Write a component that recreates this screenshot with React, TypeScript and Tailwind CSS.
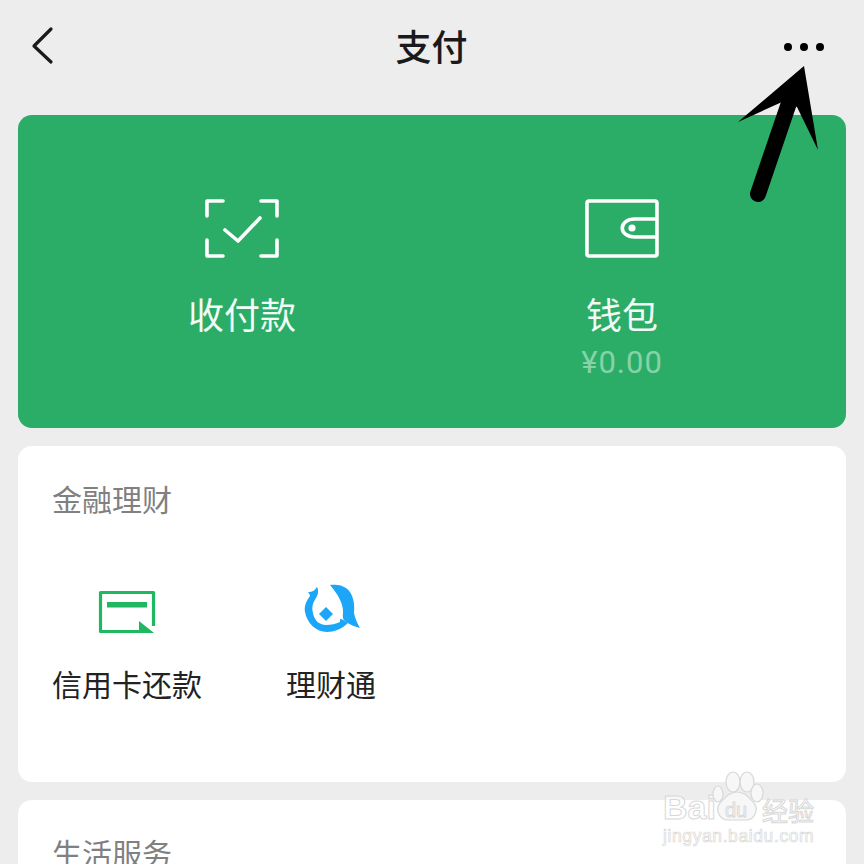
const cjk = "font-['Noto_Sans_CJK_SC','Noto_Sans',sans-serif]";

function Back() {
  return (
    <svg width="26" height="40" viewBox="0 0 26 40" fill="none" stroke="#1a1a1a" strokeWidth="3.2" strokeLinecap="round" strokeLinejoin="round">
      <path d="M21 3 L4 20 L21 36" />
    </svg>
  );
}

function ScanIcon() {
  return (
    <svg width="74" height="60" viewBox="0 0 74 60" fill="none" stroke="#fff" strokeWidth="3.6" strokeLinejoin="round" strokeLinecap="round">
      <path d="M18 2 H2 V17" />
      <path d="M56 2 H72 V17" />
      <path d="M2 41 V57 H18" />
      <path d="M72 41 V57 H56" />
      <path d="M20 31 L33 42 L55 19" />
    </svg>
  );
}

function WalletIcon() {
  return (
    <svg width="74" height="60" viewBox="0 0 74 60" fill="none" stroke="#fff" strokeWidth="3.6" strokeLinejoin="round">
      <rect x="2" y="2" width="70" height="55" rx="2" />
      <path d="M72 20 H50 C33 20 33 38 50 38 H72" />
      <circle cx="47" cy="29" r="3.6" fill="#fff" stroke="none" />
    </svg>
  );
}

function CardIcon() {
  return (
    <svg width="58" height="44" viewBox="0 0 58 44" fill="none">
      <path d="M42 41.5 H2.5 V2.5 H55.5 V36" stroke="#1fb860" strokeWidth="3.2" strokeLinejoin="round" />
      <rect x="9" y="12" width="40" height="5.5" fill="#1fb860" />
      <path d="M41 31 L56 43 H41 Z" fill="#1fb860" />
    </svg>
  );
}

function FishIcon() {
  return (
    <svg width="66" height="64" viewBox="0 0 66 64" fill="#1ba6f8">
      <path d="M32 5 C38 4 44 5 48 8 C55 13 57 23 56 33 C57 38 59 43 62 48 C58 47 52 45 47 41 C44 39 45 35 45 31 C45 24 40 14 32 5 Z" />
      <path d="M19 7 C17 10 15 12 10 12 C11 13 12 15 12 16 C8 21 6 27 7 32 C9 43 18 52 29 52 C36 52 44 49 50 43 C47 41 44 39 42 39 L42 42 C38 44 33 45 28 45 C21 45 16 40 15 33 C13 26 16 21 18 18 C20 15 21 10 19 7 Z" />
      <path d="M28 27 L35 34 L28 41 L21 34 Z" />
    </svg>
  );
}

function Arrow() {
  return (
    <svg className="absolute left-0 top-0" width="864" height="864" viewBox="0 0 864 864" fill="none">
      <path d="M804 66 L738 122 L782 102 L797 107 L818 150 Z" fill="#000" />
      <path d="M758 194 L790 100" stroke="#000" strokeWidth="16" strokeLinecap="round" />
    </svg>
  );
}

function Watermark() {
  const outline = "text-white/60 [-webkit-text-stroke:1px_#d8d8d8]";
  return (
    <div className="absolute left-[663px] top-[765px] w-[170px]">
      <div className="flex items-end h-[58px]">
        <span className={`font-['Liberation_Sans',sans-serif] text-[34px] leading-[32px] font-bold ${outline}`}>Bai</span>
        <svg width="54" height="58" viewBox="0 0 54 58" fill="#f7f7f7" stroke="#d8d8d8" strokeWidth="1.2" className="-ml-[6px] shrink-0">
          <ellipse cx="23" cy="17" rx="7" ry="10" />
          <ellipse cx="37" cy="17" rx="7" ry="10" />
          <ellipse cx="8" cy="29" rx="5" ry="8" />
          <ellipse cx="47" cy="28" rx="6" ry="9" />
          <path d="M27 27 C35 27 39 33 44 38 C49 44 45 55 36 55 C30 55 24 55 18 55 C9 55 5 44 10 38 C15 33 19 27 27 27 Z" />
          <text x="15" y="52" fontSize="20" fontFamily="Liberation Sans" fill="none" strokeWidth="0.9">du</text>
        </svg>
        <span className={`${cjk} text-[26px] leading-[26px] -ml-[2px] ${outline}`}>经验</span>
      </div>
      <div className={`font-['Liberation_Sans',sans-serif] text-[17.5px] leading-5 tracking-[0.6px] mt-[3px] text-white/60 [-webkit-text-stroke:0.7px_#d8d8d8]`}>jingyan.baidu.com</div>
    </div>
  );
}

export default function App() {
  return (
    <div className={`relative w-[864px] h-[864px] overflow-hidden bg-[#ededed] ${cjk}`}>
      <header className="h-[115px] flex items-center pl-[30px] pr-[40px] pb-[25px]">
        <div className="flex-1 mt-[2px]"><Back /></div>
        <h1 className="text-[36px] leading-none font-medium text-[#1a1a1a] ml-[9px]">支付</h1>
        <div className="flex-1 flex justify-end gap-2 mt-[4px]">
          <span className="w-2 h-2 rounded-full bg-black" />
          <span className="w-2 h-2 rounded-full bg-black" />
          <span className="w-2 h-2 rounded-full bg-black" />
        </div>
      </header>

      <section className="mx-[18px] h-[313px] rounded-[14px] bg-[#2bad67] grid grid-cols-[380px_380px] justify-center pt-[84px]">
        <div className="flex flex-col items-center">
          <ScanIcon />
          <div className="mt-[29px] text-[36px] leading-[50px] text-[#f2fbf6]">收付款</div>
        </div>
        <div className="flex flex-col items-center">
          <WalletIcon />
          <div className="mt-[29px] text-[36px] leading-[50px] text-[#f2fbf6]">钱包</div>
          <div className="mt-[3px] font-['Roboto',sans-serif] text-[31px] leading-[44px] tracking-[1px] text-[#86d3a8]">¥0.00</div>
        </div>
      </section>

      <section className="mx-[18px] mt-[18px] h-[336px] rounded-[14px] bg-white px-[34px] pt-[30px]">
        <h2 className="text-[30px] leading-[44px] text-[#808080]">金融理财</h2>
        <div className="mt-[60px] flex gap-[84px]">
          <div className="flex flex-col items-center">
            <div className="h-[64px] flex items-center"><CardIcon /></div>
            <div className="mt-[17px] text-[30px] leading-[44px] text-[#222]">信用卡还款</div>
          </div>
          <div className="flex flex-col items-center">
            <div className="h-[64px] flex items-center"><FishIcon /></div>
            <div className="mt-[17px] text-[30px] leading-[44px] text-[#222]">理财通</div>
          </div>
        </div>
      </section>

      <section className="mx-[18px] mt-[18px] h-[200px] rounded-[14px] bg-white px-[34px] pt-[30px]">
        <h2 className="text-[30px] leading-[44px] text-[#808080]">生活服务</h2>
      </section>

      <Arrow />
      <Watermark />
    </div>
  );
}
